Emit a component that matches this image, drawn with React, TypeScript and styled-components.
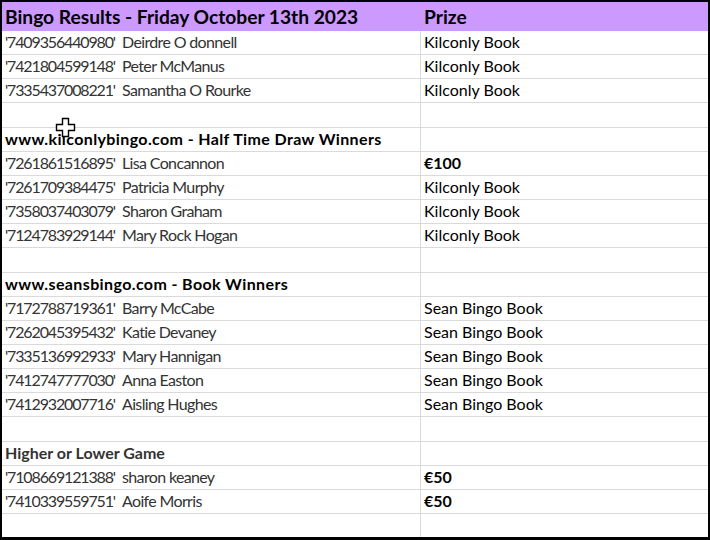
import React from "react";
import styled, { createGlobalStyle } from "styled-components";

interface Entry {
  id?: string;
  name?: string;
  prize?: string;
  boldPrize?: boolean;
  title?: string;
  dark?: boolean;
  tall?: boolean;
}

const GlobalStyle = createGlobalStyle`
  body {
    margin: 0;
    background: #ffffff;
  }
`;

const Frame = styled.div`
  position: relative;
  width: 710px;
  height: 540px;
  box-sizing: border-box;
  border-style: solid;
  border-color: #000;
  border-width: 2px 2px 3px 2px;
  overflow: hidden;
  background: #fff;
  font-family: Lato, "Open Sans", sans-serif;
`;

const HeaderRow = styled.div`
  display: grid;
  grid-template-columns: 419px 1fr;
  height: 29px;
  background: #cc99ff;
  align-items: center;
`;

const HeaderCell = styled.div`
  padding-left: 3px;
  font-size: 19.2px;
  font-weight: 700;
  color: #000;
  white-space: nowrap;
`;

const Row = styled.div<{ $tall?: boolean }>`
  display: grid;
  grid-template-columns: 419px 1fr;
  height: ${(p) => (p.$tall ? 25 : 24)}px;
`;

const Cell = styled.div<{ $bold?: boolean; $dark?: boolean; $divider?: boolean }>`
  box-sizing: border-box;
  display: flex;
  align-items: center;
  padding: 0 0 2px 3px;
  border-bottom: 1px solid #dadada;
  border-right: ${(p) => (p.$divider ? "1px solid #dadada" : "none")};
  font-size: 16px;
  font-weight: ${(p) => (p.$bold ? 700 : 400)};
  color: ${(p) => (p.$dark ? "#000" : "#333")};
  white-space: nowrap;
`;

const Line = styled.span`
  display: block;
`;

const IdText = styled.span`
  letter-spacing: -1.15px;
`;

const NameText = styled.span`
  margin-left: 3px;
  letter-spacing: -0.65px;
`;

const TitleText = styled.span<{ $wide?: boolean }>`
  letter-spacing: ${(p) => (p.$wide ? "0.38px" : "0")};
`;

const Cursor = styled.svg`
  position: absolute;
  left: 53px;
  top: 115px;
`;

const rows: Entry[] = [
  { id: "'7409356440980'", name: "Deirdre O donnell", prize: "Kilconly Book" },
  { id: "'7421804599148'", name: "Peter McManus", prize: "Kilconly Book" },
  { id: "'7335437008221'", name: "Samantha O Rourke", prize: "Kilconly Book" },
  { tall: true },
  { title: "www.kilconlybingo.com - Half Time Draw Winners", dark: true },
  { id: "'7261861516895'", name: "Lisa Concannon", prize: "€100", boldPrize: true },
  { id: "'7261709384475'", name: "Patricia Murphy", prize: "Kilconly Book" },
  { id: "'7358037403079'", name: "Sharon Graham", prize: "Kilconly Book" },
  { id: "'7124783929144'", name: "Mary Rock Hogan", prize: "Kilconly Book" },
  { tall: true },
  { title: "www.seansbingo.com - Book Winners", dark: true },
  { id: "'7172788719361'", name: "Barry McCabe", prize: "Sean Bingo Book" },
  { id: "'7262045395432'", name: "Katie Devaney", prize: "Sean Bingo Book" },
  { id: "'7335136992933'", name: "Mary Hannigan", prize: "Sean Bingo Book" },
  { id: "'7412747777030'", name: "Anna Easton", prize: "Sean Bingo Book" },
  { id: "'7412932007716'", name: "Aisling Hughes", prize: "Sean Bingo Book" },
  { tall: true },
  { title: "Higher or Lower Game" },
  { id: "'7108669121388'", name: "sharon keaney", prize: "€50", boldPrize: true },
  { id: "'7410339559751'", name: "Aoife Morris", prize: "€50", boldPrize: true },
  {},
];

const App = (): JSX.Element => {
  return (
    <Frame>
      <GlobalStyle />
      <HeaderRow>
        <HeaderCell>Bingo Results - Friday October 13th 2023</HeaderCell>
        <HeaderCell>Prize</HeaderCell>
      </HeaderRow>
      {rows.map((r, i) => (
        <Row key={i} $tall={r.tall}>
          <Cell $divider $bold={!!r.title} $dark={r.dark}>
            {r.title && <TitleText $wide={r.dark}>{r.title}</TitleText>}
            {r.id && (
              <Line>
                <IdText>{r.id}</IdText> <NameText>{r.name}</NameText>
              </Line>
            )}
          </Cell>
          <Cell $dark $bold={r.boldPrize}>
            {r.prize || ""}
          </Cell>
        </Row>
      ))}
      <Cursor width="22" height="22" viewBox="0 0 22 22">
        <path
          d="M7.5 1.5 H13.5 V7.5 H19.5 V13.5 H13.5 V19.5 H7.5 V13.5 H1.5 V7.5 H7.5 Z"
          fill="#fff"
          stroke="#000"
          strokeWidth="1.4"
        />
      </Cursor>
    </Frame>
  );
};

export default App;
